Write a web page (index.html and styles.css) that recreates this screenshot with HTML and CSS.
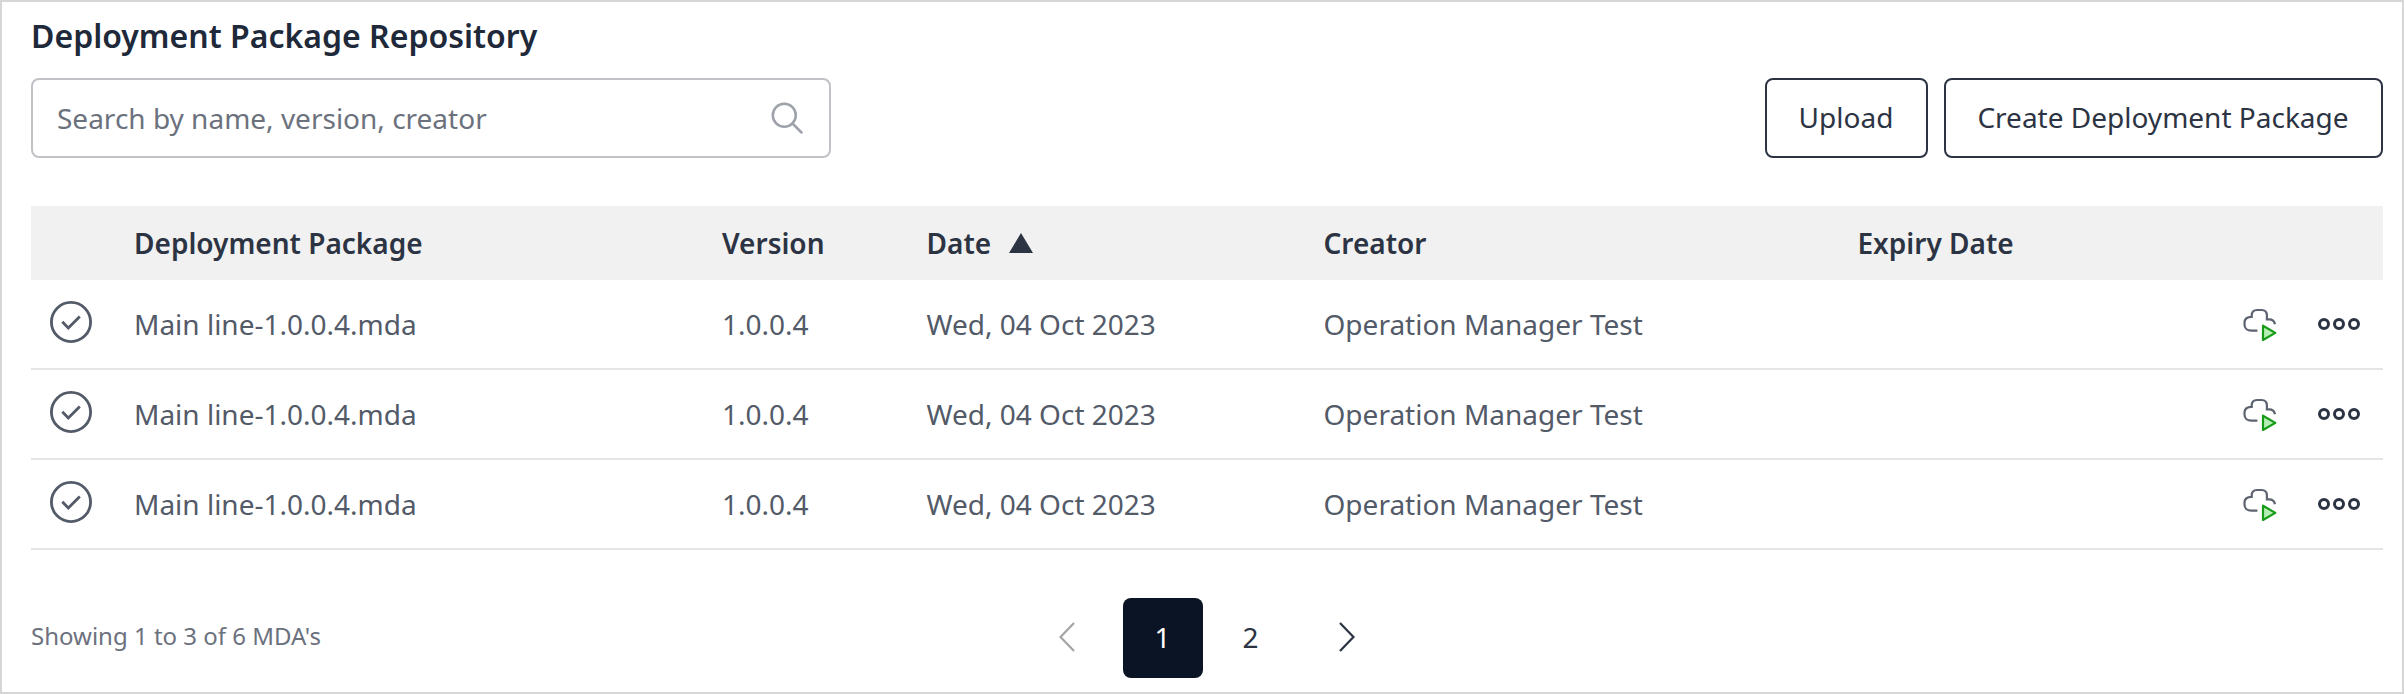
FILE: index.html
```html
<!DOCTYPE html>
<html lang="en">
<head>
<meta charset="utf-8">
<title>Deployment Package Repository</title>
<link rel="stylesheet" href="styles.css">
</head>
<body>
<svg class="sprite" aria-hidden="true">
  <symbol id="check" viewBox="0 0 42 42"><circle cx="21" cy="21" r="19.6"/><path d="M12.3 20.8l6 6.2L29.8 15.500"/></symbol>
  <symbol id="cloud" viewBox="0 0 34 34"><path class="cloud-line" d="M14.400 23.700H8.500C4 23.700 1.500 21 1.500 17.400V15.800C1.500 11.800 4.500 9.800 8.700 9.800V8.600C8.700 5 10.800 3 14 3H18.500C21.800 3 23.900 5 23.900 8.400V12.300H26C29.500 12.300 31.400 13.800 32 17.300"/><path class="play" d="M20 18.700L32.300 25.900L20 33Z"/></symbol>
  <symbol id="dots" viewBox="0 0 44 14"><circle cx="7" cy="7" r="4.500"/><circle cx="22" cy="7" r="4.500"/><circle cx="37" cy="7" r="4.500"/></symbol>
</svg>
<main class="panel">
  <h1 class="title">Deployment Package Repository</h1>
  <div class="toolbar">
    <div class="search">
      <span>Search by name, version, creator</span>
      <svg class="search-icon" viewBox="0 0 32 32"><circle cx="13.300" cy="13.300" r="11.500"/><path d="M21.500 21.500L30.500 30.500"/></svg>
    </div>
    <div class="actions">
      <button class="button upload">Upload</button>
      <button class="button create">Create Deployment Package</button>
    </div>
  </div>
  <section class="table">
    <div class="row head">
      <span></span><span>Deployment Package</span><span>Version</span>
      <span class="sorted">Date <svg class="sort" viewBox="0 0 24 20"><path d="M12 0L24 20H0Z"/></svg></span>
      <span>Creator</span><span>Expiry Date</span><span></span>
    </div>
    <div class="row">
      <svg class="check"><use href="#check"/></svg><span>Main line-1.0.0.4.mda</span><span>1.0.0.4</span><span>Wed, 04 Oct 2023</span><span>Operation Manager Test</span><span></span>
      <div class="row-actions"><svg class="cloud"><use href="#cloud"/></svg><svg class="dots"><use href="#dots"/></svg></div>
    </div>
    <div class="row">
      <svg class="check"><use href="#check"/></svg><span>Main line-1.0.0.4.mda</span><span>1.0.0.4</span><span>Wed, 04 Oct 2023</span><span>Operation Manager Test</span><span></span>
      <div class="row-actions"><svg class="cloud"><use href="#cloud"/></svg><svg class="dots"><use href="#dots"/></svg></div>
    </div>
    <div class="row">
      <svg class="check"><use href="#check"/></svg><span>Main line-1.0.0.4.mda</span><span>1.0.0.4</span><span>Wed, 04 Oct 2023</span><span>Operation Manager Test</span><span></span>
      <div class="row-actions"><svg class="cloud"><use href="#cloud"/></svg><svg class="dots"><use href="#dots"/></svg></div>
    </div>
  </section>
  <footer class="footer">
    <span class="summary">Showing 1 to 3 of 6 MDA's</span>
    <nav class="pager">
      <span class="page arrow prev"><svg viewBox="0 0 16 30"><path d="M15 1L1.500 15L15 29"/></svg></span>
      <span class="page current">1</span>
      <span class="page">2</span>
      <span class="page arrow next"><svg viewBox="0 0 16 30"><path d="M1 1L14.500 15L1 29"/></svg></span>
    </nav>
  </footer>
</main>
</body>
</html>
```
FILE: styles.css
```css
* { box-sizing: border-box; }
body { margin: 0; background: #fff; font-family: "Noto Sans", sans-serif; font-size: 28px; color: #2c3444; }
svg { display: block; fill: none; flex: none; }
.sprite { position: absolute; width: 0; height: 0; }
.panel { width: 2404px; height: 694px; border: 2px solid #d6d6d6; padding: 12px 19px 0 29px; }
.title { margin: 0; height: 44px; line-height: 44px; font-size: 32px; font-weight: 600; color: #20293a; }
.toolbar { margin-top: 20px; height: 80px; display: flex; justify-content: space-between; }
.search { width: 800px; border: 2px solid #c1c1c7; border-radius: 8px; padding: 0 26px 0 24px; display: flex; align-items: center; justify-content: space-between; color: #6c717e; }
.search-icon { width: 32px; height: 32px; margin-bottom: 1px; stroke: #9da1a9; stroke-width: 2.5; stroke-linecap: round; }
.actions { display: flex; gap: 16px; }
.button { padding: 0 1px 2px 0; border: 2px solid #2c3444; border-radius: 8px; background: #fff; font: inherit; color: inherit; }
.upload { width: 163px; }
.create { width: 439px; }
.table { margin-top: 48px; }
.row { display: grid; grid-template-columns: 103px 588px 204.5px 397px 534px 338.5px 187px; height: 90px; align-items: center; border-bottom: 2px solid #e5e5e6; color: #535a68; white-space: nowrap; }
.head { height: 74px; border: 0; background: #f1f1f1; font-weight: 600; color: #2c3444; }
.sorted { display: flex; align-items: center; gap: 18px; }
.sort { width: 24px; height: 20px; fill: #2c3444; }
.check { width: 42px; height: 42px; margin: 0 0 4px 19px; stroke: #535a68; stroke-width: 2.8; }
.row-actions { display: flex; align-items: center; padding-left: 47px; }
.cloud { width: 34px; height: 34px; margin-bottom: 1px; stroke-width: 2.2; }
.cloud-line { stroke: #5d6370; }
.play { stroke: #189b18; fill: #b5efb5; stroke-linejoin: round; }
.dots { width: 44px; height: 14px; margin-left: 40px; stroke: #2c3444; stroke-width: 3; }
.footer { margin-top: 48px; height: 80px; display: flex; align-items: center; }
.summary { width: 996px; padding-bottom: 6px; font-size: 24px; color: #6c717e; }
.pager { display: flex; gap: 8px; }
.page { width: 80px; height: 80px; display: flex; align-items: center; justify-content: center; padding: 0 1px 3px 0; }
.current { border-radius: 8px; background: #0a1424; color: #fff; }
.arrow svg { width: 16px; height: 30px; stroke-width: 2.3; stroke: #2c3444; }
.prev { margin-right: 8px; }
.prev svg { stroke: #a5a5a8; }
.next { margin-left: 8px; }
```
